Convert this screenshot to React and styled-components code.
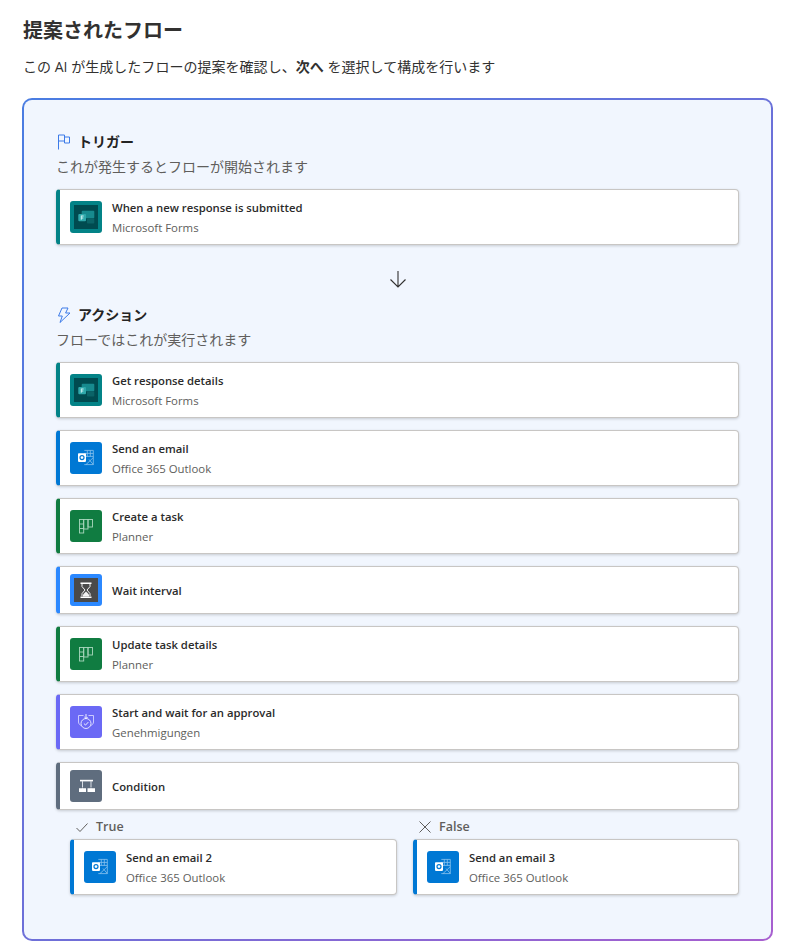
import React from "react";
import styled, { createGlobalStyle } from "styled-components";

const FONT = `"Open Sans", "Noto Sans CJK JP", sans-serif`;

const Global = createGlobalStyle`
  html, body { margin: 0; padding: 0; background: #fff; }
  body { font-family: ${FONT}; color: #323130; }
  * { box-sizing: border-box; }
`;

const Page = styled.div`
  width: 791px;
  height: 952px;
  padding: 0 18px 0 22px;
  overflow: hidden;
`;
const Title = styled.h1`
  margin: 0;
  padding: 17px 0 0 1px;
  height: 44px;
  font-size: 20px;
  line-height: 28px;
  font-weight: 700;
  color: #323130;
`;
const Subtitle = styled.p`
  margin: 0;
  height: 54px;
  padding: 13px 0 0 1px;
  font-size: 14px;
  line-height: 20px;
  letter-spacing: 0.03px;
  color: #323130;
  b { font-weight: 700; }
`;
const Panel = styled.div`
  height: 843px;
  border: 2px solid transparent;
  border-radius: 10px;
  background:
    linear-gradient(#f1f6fe, #f1f6fe) padding-box,
    linear-gradient(135deg, #4a7de2 0%, #6f6fd8 55%, #a85fcf 100%) border-box;
  padding: 32px 32px 44px 32px;
`;
const SectionHead = styled.div`
  display: flex;
  align-items: center;
  gap: 7px;
  height: 20px;
  padding-left: 1px;
  font-size: 14px;
  line-height: 20px;
  font-weight: 700;
  color: #242424;
`;
const SectionSub = styled.div`
  margin-top: 5px;
  margin-bottom: 12px;
  font-size: 14px;
  line-height: 20px;
  color: #605e5c;
`;
const Stack = styled.div`
  display: flex;
  flex-direction: column;
  gap: 12px;
`;
const Card = styled.div`
  display: flex;
  align-items: center;
  gap: 10px;
  height: ${(p) => (p.$compact ? 48 : 56)}px;
  padding-left: 10px;
  background: #fff;
  border: 1px solid #c8c6c4;
  border-left: 4px solid ${(p) => p.$accent};
  border-radius: 4px;
  box-shadow: 0 1px 3px rgba(0, 0, 0, 0.18);
`;
const IconTile = styled.div`
  width: 32px;
  height: 32px;
  flex: none;
  border-radius: 3px;
  background: ${(p) => p.$bg};
  svg { display: block; }
`;
const CardText = styled.div`
  display: flex;
  flex-direction: column;
  gap: 4px;
  min-width: 0;
  padding-top: 2px;
`;
const CardTitle = styled.div`
  font-size: 11.3px;
  line-height: 16px;
  font-weight: 600;
  color: #2b2b2b;
`;
const CardSub = styled.div`
  font-size: 11.4px;
  line-height: 16px;
  color: #605e5c;
`;
const ArrowRow = styled.div`
  display: flex;
  justify-content: center;
  padding: 23px 0 15px;
  svg { display: block; }
`;
const Branches = styled.div`
  display: grid;
  grid-template-columns: 327px 326px;
  column-gap: 16px;
  margin: 7px 0 0 14px;
`;
const Branch = styled.div`
  display: flex;
  flex-direction: column;
  gap: 2px;
`;
const BranchLabel = styled.div`
  display: flex;
  align-items: center;
  gap: 7px;
  height: 20px;
  padding-left: 5px;
  font-size: 12.5px;
  line-height: 20px;
  font-weight: 600;
  color: #605e5c;
  svg { display: block; }
`;

const FlagIcon = () => (
  <svg width="14" height="16" viewBox="0 0 14 16" fill="none" stroke="#3d7be8" strokeWidth="1">
    <path d="M1.5 15.5V1h6v2h5v6h-5V7h-6M7.5 3v4" />
  </svg>
);
const BoltIcon = () => (
  <svg width="14" height="16" viewBox="0 0 14 16" fill="none" stroke="#3d7be8" strokeWidth="1" strokeLinejoin="round">
    <path d="M5 1h6L8.6 6H13L3 15.5 5.3 9H1.5z" />
  </svg>
);
const ArrowDown = () => (
  <svg width="22" height="22" viewBox="0 0 22 22" fill="none" stroke="#323130" strokeWidth="1.1">
    <path d="M11 3v16M3.5 11.5 11 19l7.5-7.5" />
  </svg>
);
const CheckIcon = () => (
  <svg width="14" height="14" viewBox="0 0 14 14" fill="none" stroke="#605e5c" strokeWidth="1">
    <path d="M1.5 8 5 11.5 12.5 3.5" />
  </svg>
);
const CrossIcon = () => (
  <svg width="14" height="14" viewBox="0 0 14 14" fill="none" stroke="#605e5c" strokeWidth="1">
    <path d="M1.5 1.5 12.5 12.5M12.5 1.5 1.5 12.5" />
  </svg>
);

const FormsGlyph = () => (
  <svg width="32" height="32" viewBox="0 0 32 32">
    <rect x="4" y="4" width="24" height="24" fill="#004b50" />
    <rect x="11.7" y="9.7" width="12.6" height="7.6" rx="1" fill="#178a8e" />
    <rect x="17" y="17.3" width="7.3" height="5.2" rx="0.8" fill="#0b6367" />
    <rect x="8.3" y="13" width="7.7" height="7.2" rx="1" fill="#2fa8ab" />
    <path d="M10.8 14.6h2.8v.9h-1.9v1h1.6v.9h-1.6v1.4h-.9z" fill="#d4f2f2" />
  </svg>
);
const OutlookGlyph = () => (
  <svg width="32" height="32" viewBox="0 0 32 32">
    <g fill="none" stroke="#8cc3ee" strokeWidth="0.8">
      <path d="M14.3 8.4h9v14.2h-9M17.3 8.4v6M20.3 8.4v6M14.3 11.4h9M14.3 14.4h9" />
      <path d="M16 22.6l7.3-7M19 17.5l4.3 5" />
    </g>
    <rect x="8" y="11.3" width="8" height="8.6" rx="0.8" fill="#fff" />
    <circle cx="12" cy="15.6" r="2" fill="none" stroke="#0078d4" strokeWidth="1.2" />
  </svg>
);
const PlannerGlyph = () => (
  <svg width="32" height="32" viewBox="0 0 32 32" fill="none" stroke="#a9d6bd" strokeWidth="0.9">
    <rect x="9.5" y="9.5" width="4.2" height="13.5" />
    <rect x="13.7" y="9.5" width="4.3" height="9.5" />
    <rect x="18" y="9.5" width="4.5" height="7.5" />
    <path d="M9.5 14h4.2M9.5 18.5h4.2" />
  </svg>
);
const WaitGlyph = () => (
  <svg width="32" height="32" viewBox="0 0 32 32">
    <rect x="4" y="4" width="24" height="24" fill="#4a4a4a" />
    <path d="M10.5 8.5h11v1.6h-11zM10.5 22.4h11V24h-11z" fill="#fff" />
    <path d="M12 10v2.6l3 3.4-3 3.6v2.4M20 10v2.6l-3 3.4 3 3.6v2.4" fill="none" stroke="#f1f1f1" strokeWidth="1" />
    <path d="M13 20.4l3-3 3 3v2h-6z" fill="#f1f1f1" />
  </svg>
);
const ApprovalGlyph = () => (
  <svg width="32" height="32" viewBox="0 0 32 32" fill="none" stroke="#d5d4ff" strokeWidth="0.9">
    <path d="M13.5 9.5H8.5V16c0 1.7 1.2 3 3 3.6M18.5 9.5h5V16c0 1.7-1.2 3-3 3.6" />
    <circle cx="16" cy="17.5" r="5" stroke="#eeeeff" />
    <path d="M13.9 17.5l1.6 1.6 2.8-3M16 8v4.5M14.4 11 16 12.6 17.6 11" stroke="#fff" />
  </svg>
);
const ConditionGlyph = () => (
  <svg width="32" height="32" viewBox="0 0 32 32">
    <path d="M10 9.8h13v1.6H10z" fill="#fff" />
    <path d="M12.5 11v6M21 11v6" fill="none" stroke="#d9dee5" strokeWidth="1" />
    <path d="M9 18.2h3.2l.3-2 .3 2H16V22H9zM17.5 18.2h3.2l.3-2 .3 2H25V22h-7.5z" fill="#fff" />
  </svg>
);

const KINDS = {
  forms: { accent: "#038387", bg: "#038387", Glyph: FormsGlyph, sub: "Microsoft Forms" },
  outlook: { accent: "#0078d4", bg: "#0078d4", Glyph: OutlookGlyph, sub: "Office 365 Outlook" },
  planner: { accent: "#107c41", bg: "#107c41", Glyph: PlannerGlyph, sub: "Planner" },
  wait: { accent: "#2b88ff", bg: "#2b88ff", Glyph: WaitGlyph },
  approval: { accent: "#6b69f5", bg: "#6b69f5", Glyph: ApprovalGlyph, sub: "Genehmigungen" },
  condition: { accent: "#5f6d7e", bg: "#5f6d7e", Glyph: ConditionGlyph },
};

const Step = ({ kind, title }) => {
  const { accent, bg, Glyph, sub } = KINDS[kind];
  return (
    <Card $accent={accent} $compact={!sub}>
      <IconTile $bg={bg}><Glyph /></IconTile>
      <CardText>
        <CardTitle>{title}</CardTitle>
        {sub && <CardSub>{sub}</CardSub>}
      </CardText>
    </Card>
  );
};

const ACTIONS = [
  ["forms", "Get response details"],
  ["outlook", "Send an email"],
  ["planner", "Create a task"],
  ["wait", "Wait interval"],
  ["planner", "Update task details"],
  ["approval", "Start and wait for an approval"],
  ["condition", "Condition"],
];

export default function App() {
  return (
    <Page>
      <Global />
      <Title>提案されたフロー</Title>
      <Subtitle>この AI が生成したフローの提案を確認し、<b>次へ</b> を選択して構成を行います</Subtitle>
      <Panel>
        <SectionHead><FlagIcon />トリガー</SectionHead>
        <SectionSub>これが発生するとフローが開始されます</SectionSub>
        <Step kind="forms" title="When a new response is submitted" />
        <ArrowRow><ArrowDown /></ArrowRow>
        <SectionHead><BoltIcon />アクション</SectionHead>
        <SectionSub>フローではこれが実行されます</SectionSub>
        <Stack>
          {ACTIONS.map(([kind, title]) => <Step key={title} kind={kind} title={title} />)}
        </Stack>
        <Branches>
          <Branch>
            <BranchLabel><CheckIcon />True</BranchLabel>
            <Step kind="outlook" title="Send an email 2" />
          </Branch>
          <Branch>
            <BranchLabel><CrossIcon />False</BranchLabel>
            <Step kind="outlook" title="Send an email 3" />
          </Branch>
        </Branches>
      </Panel>
    </Page>
  );
}
